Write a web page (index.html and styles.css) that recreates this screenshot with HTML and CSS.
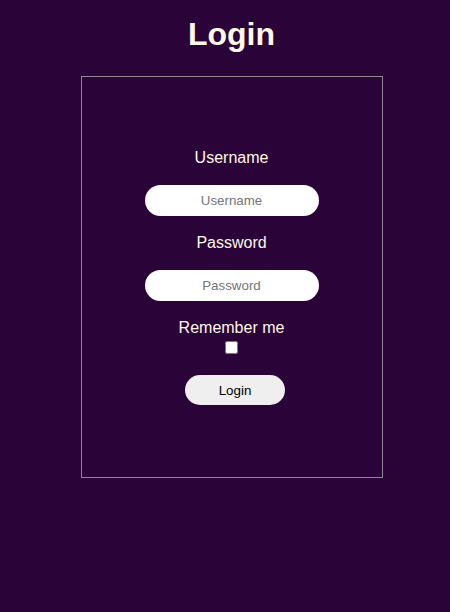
FILE: index.html
```html
<!DOCTYPE html>
<html>
<head>
<meta charset="utf-8">
<link rel="stylesheet" href="styles.css">
</head>
<body>
<h1 class="title">Login</h1>
<form class="card">
  <label class="label" for="u">Username</label>
  <input class="field" id="u" type="text" placeholder="Username">
  <label class="label" for="p">Password</label>
  <input class="field" id="p" type="password" placeholder="Password">
  <label class="label remember" for="r">Remember me</label>
  <input class="check" id="r" type="checkbox">
  <button class="btn" type="button">Login</button>
</form>
</body>
</html>
```
FILE: styles.css
```css
html, body {
  background: #2a0339;
}
body {
  margin: 0 8px 0 21px;
  font-family: "Liberation Sans", Arial, sans-serif;
  color: #fff8e5;
}
.title {
  font-size: 32px;
  font-weight: bold;
  text-align: center;
  margin: 0;
  padding: 16px 0 23px;
  line-height: normal;
}
.card {
  width: 300px;
  height: 400px;
  margin: 0 auto;
  border: 1px solid #8c8a90;
  display: flex;
  flex-direction: column;
  align-items: center;
  justify-content: center;
}
.label {
  font-size: 16px;
  line-height: normal;
}
.field {
  box-sizing: border-box;
  width: 174px;
  height: 31px;
  margin: 18px 0 18px;
  border: none;
  border-radius: 16px;
  background: #fff;
  text-align: center;
  font-family: "Liberation Sans", Arial, sans-serif;
  font-size: 13.33px;
  color: #000;
  outline: none;
}
.field::placeholder {
  color: #757575;
}
.check {
  width: 13px;
  height: 13px;
  margin: 4px 0 0;
}
.btn {
  width: 100px;
  height: 30px;
  margin: 21px 0 0 7px;
  border: none;
  border-radius: 15px;
  background: #efefef;
  color: #000;
  font-family: "Liberation Sans", Arial, sans-serif;
  font-size: 13.33px;
}
```
